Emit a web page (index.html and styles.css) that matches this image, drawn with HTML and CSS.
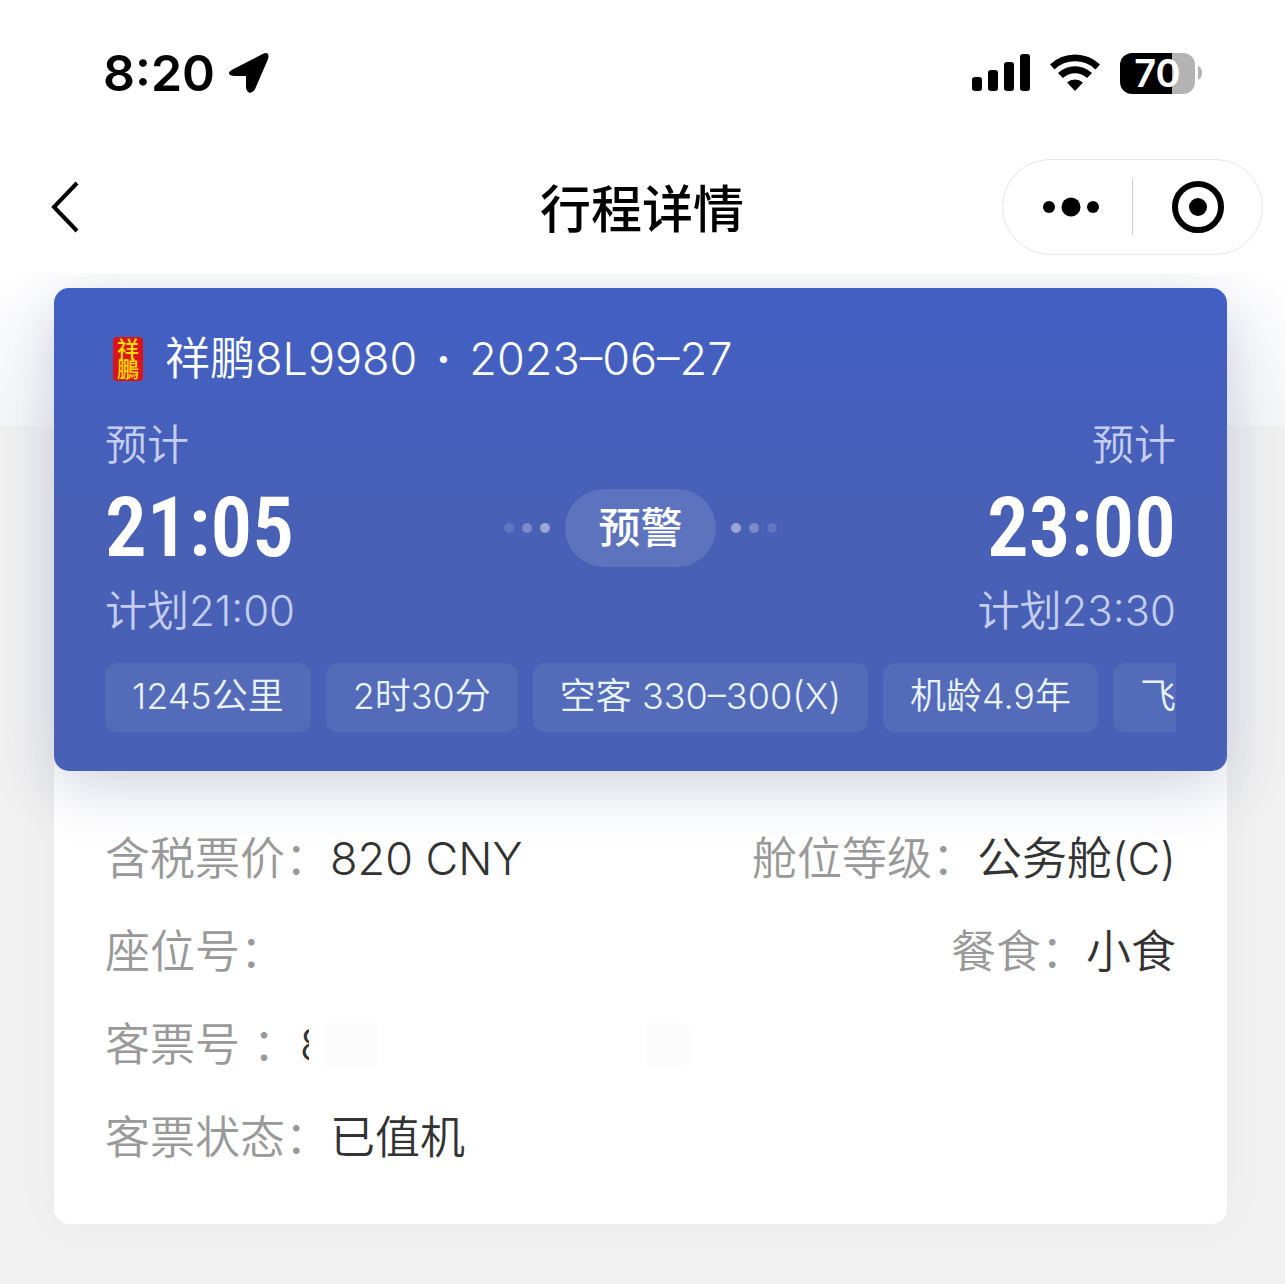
FILE: index.html
```html
<!DOCTYPE html>
<html lang="zh-CN">
<head>
  <meta charset="UTF-8">
  <meta name="viewport" content="width=device-width, initial-scale=1.0">
  <title>行程详情</title>
  <link rel="stylesheet" href="styles.css">
</head>
<body>

  <!-- Status bar -->
  <div class="status-bar">
    <div class="status-left">
      <span class="clock">8:20</span>
      <svg class="location-icon" width="40" height="40" viewBox="0 0 40 40">
        <path d="M3 18 L34 2 Q40 -1 38 6 L25 36 Q20 42 18 35 L18 22 L5 22 Q-2 21 3 18 Z" stroke="#000" stroke-width="2"/>
      </svg>
    </div>
    <div class="status-right">
      <svg width="58" height="38" viewBox="0 0 58 38">
        <rect x="0" y="23" width="10" height="14" rx="3"/>
        <rect x="16" y="16" width="10" height="21" rx="3"/>
        <rect x="32" y="8" width="10" height="29" rx="3"/>
        <rect x="48" y="0" width="10" height="37" rx="3"/>
      </svg>
      <svg width="52" height="38" viewBox="0 0 52 38">
        <path d="M1 10.5 A36 36 0 0 1 51 10.5 L46.5 15.5 A29.5 29.5 0 0 0 5.5 15.5 Z"/>
        <path d="M9 19 A24.5 24.5 0 0 1 43 19 L38 24 A17.5 17.5 0 0 0 14 24 Z"/>
        <path d="M18 28.5 A12 12 0 0 1 34 28.5 L26 37 Z"/>
      </svg>
      <div class="battery">
        <span class="battery-level">70</span>
        <svg class="battery-tip" width="4" height="14" viewBox="0 0 4 14">
          <path d="M0 0 Q4 2 4 7 Q4 12 0 14 Z"/>
        </svg>
      </div>
    </div>
  </div>

  <!-- Navigation -->
  <header class="nav">
    <button class="back-btn" aria-label="返回">
      <svg width="28" height="52" viewBox="0 0 28 52">
        <path d="M26 2 L3 26 L26 50" fill="none" stroke="#000" stroke-width="4"/>
      </svg>
    </button>
    <h1>行程详情</h1>
    <div class="capsule">
      <button class="more-btn" aria-label="更多">
        <svg width="56" height="20" viewBox="0 0 56 20">
          <circle cx="6" cy="10" r="6"/>
          <circle cx="28" cy="10" r="9.5"/>
          <circle cx="50" cy="10" r="6"/>
        </svg>
      </button>
      <span class="capsule-line"></span>
      <button class="close-btn" aria-label="关闭">
        <svg width="52" height="52" viewBox="0 0 52 52">
          <circle cx="26" cy="26" r="23" fill="none" stroke="#000" stroke-width="6"/>
          <circle cx="26" cy="26" r="9"/>
        </svg>
      </button>
    </div>
  </header>

  <main class="trip">
    <!-- Flight card -->
    <section class="flight-card">
      <div class="flight-title">
        <span class="airline-logo">祥鵬</span>
        <span>祥鹏8L9980</span>
        <span class="separator">·</span>
        <span>2023–06–27</span>
      </div>

      <div class="flight-times">
        <div class="departure">
          <p class="sub">预计</p>
          <p class="time">21:05</p>
          <p class="sub">计划21:00</p>
        </div>
        <div class="flight-status">
          <span class="dots"><i></i><i></i><i></i></span>
          <span class="status-label">预警</span>
          <span class="dots dots-right"><i></i><i></i><i></i></span>
        </div>
        <div class="arrival">
          <p class="sub">预计</p>
          <p class="time">23:00</p>
          <p class="sub">计划23:30</p>
        </div>
      </div>

      <ul class="tags">
        <li>1245公里</li>
        <li>2时30分</li>
        <li>空客 330–300(X)</li>
        <li>机龄4.9年</li>
        <li>飞</li>
      </ul>
    </section>

    <!-- Ticket details -->
    <section class="ticket">
      <div class="row">
        <p><span class="label">含税票价：</span>820 CNY</p>
        <p><span class="label">舱位等级：</span>公务舱(C)</p>
      </div>
      <div class="row">
        <p><span class="label">座位号：</span></p>
        <p><span class="label">餐食：</span>小食</p>
      </div>
      <div class="row">
        <p class="ticket-number">
          <span class="label">客票号 ：</span>
          <span class="cut-digit">8</span>
          <span class="mask"></span>
          <span class="mask mask-end"></span>
        </p>
      </div>
      <div class="row">
        <p><span class="label">客票状态：</span>已值机</p>
      </div>
    </section>
  </main>

</body>
</html>
```
FILE: styles.css
```css
* {
  box-sizing: border-box;
}
body {
  font-family: Inter, "Noto Sans CJK SC", sans-serif;
  background-color: #f1f1f1;
  margin: 0;
  color: #333;
}
h1, p, ul {
  margin: 0;
  padding: 0;
}
button {
  background: none;
  border: none;
  padding: 0;
  display: flex;
  align-items: center;
  justify-content: center;
  cursor: pointer;
}

/* Status bar */
.status-bar {
  display: flex;
  justify-content: space-between;
  align-items: center;
  height: 146px;
  padding: 0 83px 0 103px;
  background-color: #fff;
  color: #000;
}
.status-left,
.status-right {
  display: flex;
  align-items: center;
}
.status-left {
  gap: 14px;
}
.status-right {
  gap: 19px;
}
.clock {
  font-size: 50px;
  font-weight: 600;
}
.battery {
  display: flex;
  align-items: center;
  gap: 3px;
}
.battery-level {
  width: 75px;
  height: 41px;
  border-radius: 12px;
  background: linear-gradient(to right, #000 70%, #b3b3b3 70%);
  color: #fff;
  font-size: 38px;
  font-weight: 600;
  line-height: 41px;
  text-align: center;
}
.battery-tip {
  fill: #b3b3b3;
}

/* Navigation */
.nav {
  position: relative;
  z-index: 1;
  display: grid;
  grid-template-columns: 1fr auto 1fr;
  align-items: center;
  height: 127px;
  padding: 0 22px 5px 51px;
  background-color: #fff;
}
.back-btn {
  justify-self: start;
}
.nav h1 {
  color: #000;
  font-size: 51px;
  font-weight: 500;
  line-height: 60px;
  margin: 6px 30px 0 0;
}
.capsule {
  justify-self: end;
  display: flex;
  align-items: center;
  width: 261px;
  height: 96px;
  border: 1px solid #e6e6e6;
  border-radius: 48px;
}
.capsule button {
  width: 129px;
  height: 100%;
}
.capsule .more-btn {
  padding-left: 6px;
}
.capsule-line {
  width: 1px;
  height: 56px;
  background-color: #ccc;
}

/* Trip */
.trip {
  padding: 15px 58px 61px 54px;
  background: linear-gradient(#fff, #f5f6f8) no-repeat 0 0 / 100% 153px;
}
.flight-card {
  position: relative;
  padding: 38px 51px 39px;
  border-radius: 15px;
  background: linear-gradient(#425fc4, #4860b5 50%);
  box-shadow: 0 15px 60px rgba(60, 70, 120, 0.24);
  color: #fff;
}
.flight-title {
  display: flex;
  align-items: center;
  height: 66px;
  font-size: 45px;
  font-weight: 350;
  line-height: 62px;
}
.airline-logo {
  width: 30px;
  margin: 0 22px 0 8px;
  padding: 2px 4px;
  border-radius: 4px;
  background-color: #d9151b;
  color: #ffdf00;
  font-size: 22px;
  font-weight: 500;
  line-height: 20px;
}
.separator {
  width: 52px;
  font-weight: 600;
  text-align: center;
}
.flight-times {
  display: grid;
  grid-template-columns: 1fr auto 1fr;
  align-items: center;
  margin: 23px 0 22px;
}
.arrival {
  text-align: right;
}
.sub {
  color: #c5cef0;
  font-size: 42px;
  font-weight: 350;
  line-height: 60px;
}
.time {
  font-family: "Roboto Condensed", Roboto, sans-serif;
  font-size: 83px;
  font-weight: 600;
  line-height: 106px;
}
.flight-status {
  display: flex;
  align-items: center;
  gap: 15px;
}
.status-label {
  padding: 0 33px;
  border-radius: 39px;
  background-color: rgba(255, 255, 255, 0.12);
  font-size: 42px;
  font-weight: 500;
  line-height: 78px;
}
.dots {
  display: flex;
  gap: 8px;
}
.dots i {
  width: 10px;
  height: 10px;
  border-radius: 50%;
  background-color: rgba(255, 255, 255, 0.45);
}
.dots i:nth-child(1) {
  opacity: 0.3;
}
.dots i:nth-child(2) {
  opacity: 0.6;
}
.dots-right {
  flex-direction: row-reverse;
}
.tags {
  display: flex;
  gap: 15px;
  overflow: hidden;
  list-style: none;
}
.tags li {
  flex: none;
  padding: 0 27px 3px;
  border-radius: 12px;
  background-color: rgba(255, 255, 255, 0.07);
  color: #e9f3ff;
  font-size: 36px;
  font-weight: 350;
  line-height: 66px;
}

/* Ticket details */
.ticket {
  margin-top: -20px;
  padding: 61px 51px 40px;
  border-radius: 15px;
  background-color: #fff;
  box-shadow: 0 0 50px rgba(0, 0, 0, 0.03);
  font-size: 45px;
  font-weight: 350;
}
.row {
  display: flex;
  justify-content: space-between;
  line-height: 93px;
}
.label {
  color: #999;
}
.ticket-number {
  display: flex;
  align-items: center;
}
.cut-digit {
  width: 9px;
  margin: 0 2px;
  overflow: hidden;
}
.mask {
  width: 54px;
  height: 44px;
  margin-left: 12px;
  background-color: #fcfcfc;
}
.mask-end {
  width: 47px;
  margin-left: 270px;
  border-radius: 0 15px 15px 0;
}
```
